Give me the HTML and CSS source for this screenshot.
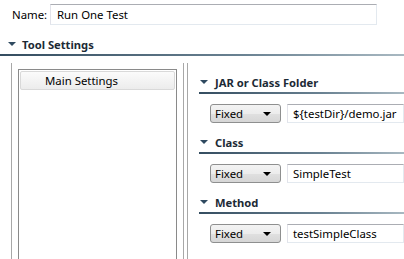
FILE: index.html
```html
<!DOCTYPE html>
<html lang="en">

<head>
    <meta charset="UTF-8">
    <title>Run One Test</title>
    <link rel="stylesheet" href="styles.css">
</head>

<body>
    <div class="name_row">
        <span class="name_label">Name:</span>
        <div class="textbox name_box">Run One Test</div>
    </div>

    <div class="section_head top_head">
        <span class="twisty"></span>
        <span class="head_title">Tool Settings</span>
    </div>

    <div class="tool_body">
        <div class="left_pane">
            <div class="list_box">
                <div class="list_item">Main Settings</div>
            </div>
        </div>

        <div class="right_pane">
            <div class="section">
                <div class="section_head">
                    <span class="twisty"></span>
                    <span class="head_title">JAR or Class Folder</span>
                </div>
                <div class="field_row">
                    <div class="combo">Fixed<span class="combo_arrow"></span></div>
                    <div class="textbox">${testDir}/demo.jar</div>
                </div>
            </div>
            <div class="section">
                <div class="section_head">
                    <span class="twisty"></span>
                    <span class="head_title">Class</span>
                </div>
                <div class="field_row">
                    <div class="combo">Fixed<span class="combo_arrow"></span></div>
                    <div class="textbox">SimpleTest</div>
                </div>
            </div>
            <div class="section">
                <div class="section_head">
                    <span class="twisty"></span>
                    <span class="head_title">Method</span>
                </div>
                <div class="field_row">
                    <div class="combo">Fixed<span class="combo_arrow"></span></div>
                    <div class="textbox">testSimpleClass</div>
                </div>
            </div>
        </div>
    </div>
</body>

</html>
```

FILE: styles.css
```css
* {
    margin: 0;
    padding: 0;
    box-sizing: border-box;
}

body {
    width: 404px;
    height: 259px;
    overflow: hidden;
    background: #fff;
    color: #000;
    font-family: "Noto Sans", "Open Sans", sans-serif;
    font-size: 11.4px;
}

.name_row {
    display: flex;
    align-items: center;
    padding: 4px 0 0 12px;
}

.name_label {
    width: 38px;
}

.textbox {
    height: 21px;
    line-height: 19px;
    padding-left: 6px;
    border: 1px solid #e3e9ef;
    border-top-color: #abadb3;
    border-left-color: #e2e3ea;
    background: #fff;
    white-space: nowrap;
    overflow: hidden;
}

.name_box {
    width: 327px;
}

.section_head {
    display: flex;
    align-items: center;
    height: 22px;
    border-bottom: 2px solid #4f6a7e;
    border-image: linear-gradient(to right, #344d60, #6a8292 60%, #a9b9c2) 1;
}

.top_head {
    margin-top: 9px;
    padding-left: 8px;
}

.twisty {
    width: 0;
    height: 0;
    border-left: 4px solid transparent;
    border-right: 4px solid transparent;
    border-top: 4px solid #2f4a60;
    margin-right: 6px;
}

.head_title {
    font-size: 11.2px;
    font-weight: bold;
    color: #1c2a35;
}

.tool_body {
    display: flex;
    margin-top: 7px;
    height: 200px;
}

.left_pane {
    width: 173px;
    margin-left: 11px;
    padding: 6px 6px 0;
    border-left: 1px solid #a8a8a8;
    border-right: 1px solid #a8a8a8;
}

.list_box {
    height: 100%;
    padding: 1px;
    border: 1px solid #8a8a8a;
    border-bottom: none;
}

.list_item {
    height: 19px;
    line-height: 18px;
    padding-left: 24px;
    border: 1px solid #d9d9d9;
    border-radius: 2px;
    background: linear-gradient(#fbfbfb, #ececec);
}

.right_pane {
    flex: 1;
    margin-left: 3px;
    padding: 9px 0 0 11px;
    border-left: 1px solid #a8a8a8;
}

.right_pane .section_head {
    padding-left: 1px;
}

.right_pane .twisty {
    margin-right: 7px;
}

.section {
    margin-bottom: 9px;
}

.field_row {
    display: flex;
    gap: 6px;
    margin-top: 10px;
    padding-left: 11px;
}

.field_row .textbox {
    flex: 1;
    height: 19px;
    line-height: 17px;
    padding-left: 5px;
}

.combo {
    position: relative;
    width: 71px;
    height: 19px;
    line-height: 17px;
    padding-left: 4px;
    border: 1px solid #8e8f8f;
    border-radius: 3px;
    background: linear-gradient(#f3f3f3 0%, #ececec 50%, #e0e0e0 51%, #d6d6d6 100%);
}

.combo_arrow {
    position: absolute;
    right: 9px;
    top: 7px;
    width: 0;
    height: 0;
    border-left: 4px solid transparent;
    border-right: 4px solid transparent;
    border-top: 4px solid #000;
}
```
